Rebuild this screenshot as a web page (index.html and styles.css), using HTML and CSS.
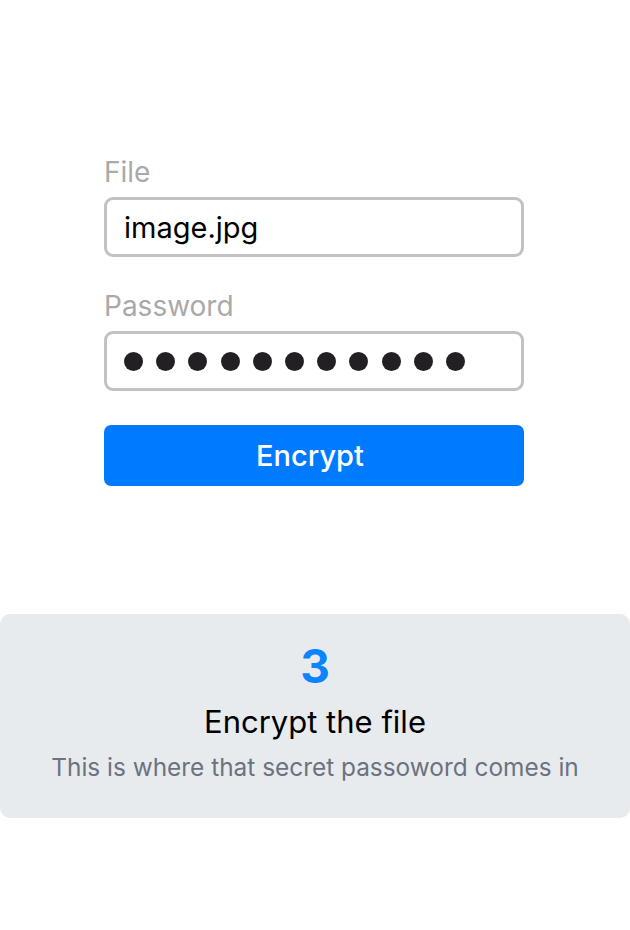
FILE: index.html
```html
<!DOCTYPE html>
<html lang="en">
<head>
    <meta charset="UTF-8">
    <meta name="viewport" content="width=device-width, initial-scale=1.0">
    <title>Encrypt a file</title>
    <link rel="stylesheet" href="styles.css">
</head>
<body>

    <!-- Encrypt form -->
    <div class="form">
        <label class="field-label" for="fileName">File</label>
        <div class="field" id="fileName">image.jpg</div>

        <label class="field-label" for="password">Password</label>
        <div class="field dots" id="password">
            <span></span><span></span><span></span><span></span>
            <span></span><span></span><span></span><span></span>
            <span></span><span></span><span></span>
        </div>

        <button class="encrypt-btn">Encrypt</button>
    </div>

    <!-- Step card -->
    <div class="step">
        <div class="step-number">3</div>
        <h2 class="step-title">Encrypt the file</h2>
        <p class="step-text">This is where that secret passoword comes in</p>
    </div>

</body>
</html>
```

FILE: styles.css
```css
* {
    margin: 0;
    padding: 0;
    box-sizing: border-box;
}

body {
    font-family: Inter, "Noto Sans", sans-serif;
    background-color: #ffffff;
    width: 630px;
    height: 930px;
}

.form {
    width: 420px;
    margin: 155px 0 0 104px;
    display: flex;
    flex-direction: column;
}

.field-label {
    font-size: 28px;
    line-height: 34px;
    color: #a9a9a9;
    margin-bottom: 8px;
}

.field {
    height: 60px;
    border: 3px solid #c2c2c2;
    border-radius: 9px;
    padding: 0 17px;
    font-size: 29px;
    color: #000000;
    display: flex;
    align-items: center;
    margin-bottom: 32px;
}

.dots {
    gap: 13.2px;
    margin-bottom: 34px;
}

.dots span {
    width: 19px;
    height: 19px;
    border-radius: 50%;
    background-color: #222022;
}

.encrypt-btn {
    height: 61px;
    border: none;
    border-radius: 7px;
    background-color: #007aff;
    color: #ffffff;
    font-family: inherit;
    font-size: 29px;
    font-weight: 500;
    padding-right: 8px;
}

.step {
    margin-top: 128px;
    height: 204px;
    background-color: #e8ebee;
    border-radius: 10px;
    display: flex;
    flex-direction: column;
    align-items: center;
    padding-top: 24px;
}

.step-number {
    font-size: 46px;
    font-weight: 700;
    line-height: 56px;
    color: #0a84ff;
}

.step-title {
    font-size: 31px;
    font-weight: 400;
    line-height: 40px;
    color: #000000;
    margin-top: 8px;
}

.step-text {
    font-size: 24.4px;
    line-height: 32px;
    color: #6b7280;
    margin-top: 9px;
}
```
